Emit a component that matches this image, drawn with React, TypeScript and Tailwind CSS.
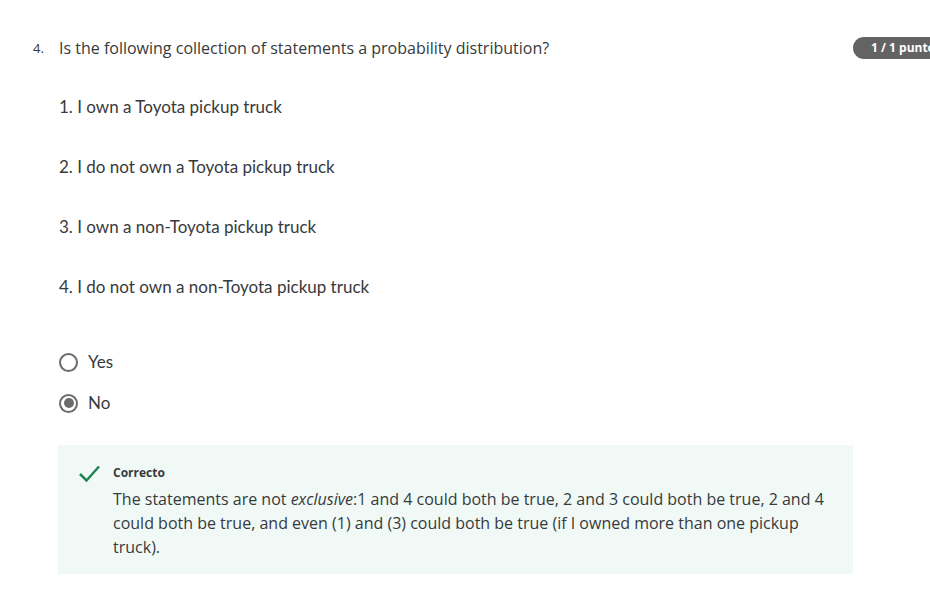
import React from "react";

export default function App() {
  const items = [
    "1. I own a Toyota pickup truck",
    "2. I do not own a Toyota pickup truck",
    "3. I own a non-Toyota pickup truck",
    "4. I do not own a non-Toyota pickup truck",
  ];
  return (
    <div className="w-[930px] h-[596px] bg-white overflow-hidden relative text-[#373a3c]" style={{ fontFamily: '"Open Sans", sans-serif' }}>
      <div className="absolute left-[853px] top-[37px] h-[22px] pl-[18px] pr-4 rounded-full bg-[#636363] text-white text-[12px] font-bold leading-[22px] whitespace-nowrap">
        1 / 1 punto
      </div>
      <div className="flex pt-[36px]">
        <div className="w-[59px] pl-[33px] text-[13px] leading-[24px]">4.</div>
        <div className="flex-1">
          <div className="text-[16px] leading-[24px]">Is the following collection of statements a probability distribution?</div>
          <div className="flex flex-col pt-[35px] gap-[36px]" style={{ fontFamily: 'Lato, sans-serif' }}>
            {items.map((t) => (
              <div key={t} className="text-[17px] leading-[24px]">{t}</div>
            ))}
          </div>
          <div className="flex flex-col pt-[51px] gap-[17px]" style={{ fontFamily: 'Lato, sans-serif' }}>
            <div className="flex items-center h-[24px]">
              <span className="w-[19px] h-[19px] rounded-full border-2 border-[#6b6b6b] mr-[10px]" />
              <span className="text-[17px]">Yes</span>
            </div>
            <div className="flex items-center h-[24px]">
              <span className="w-[19px] h-[19px] rounded-full border-2 border-[#6b6b6b] mr-[10px] flex items-center justify-center">
                <span className="w-[10px] h-[10px] rounded-full bg-[#6b6b6b]" />
              </span>
              <span className="text-[17px]">No</span>
            </div>
          </div>
        </div>
      </div>
      <div className="ml-[58px] mt-[30px] w-[795px] bg-[#f0f9f6] flex pt-[18px] pb-[15px]">
        <div className="w-[55px] flex justify-end pr-[12px] pt-[1px]">
          <svg width="23" height="19" viewBox="0 0 23 19">
            <path d="M2 10 L8.5 16.5 L21 2.5" fill="none" stroke="#1f8354" strokeWidth="2.5" />
          </svg>
        </div>
        <div className="flex-1 pr-[20px]">
          <div className="text-[12px] font-bold leading-[20px]">Correcto</div>
          <div className="text-[16px] leading-[24px] mt-[4px]">
            The statements are not <i>exclusive</i>:1 and 4 could both be true, 2 and 3 could both be true, 2 and 4 could both be true, and even (1) and (3) could both be true (if I owned more than one pickup truck).
          </div>
        </div>
      </div>
    </div>
  );
}
